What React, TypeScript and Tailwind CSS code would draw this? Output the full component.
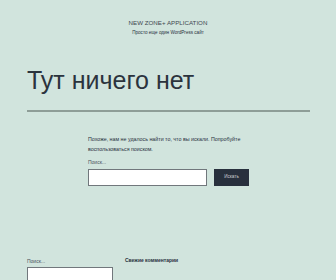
import React from "react";

export default function App() {
  return (
    <div className="w-[336px] h-[280px] overflow-hidden bg-[#d1e4dd] text-[#28303d] font-['Liberation_Sans',Arial,sans-serif]">
      <header className="pt-[19px] flex flex-col items-center">
        <div className="text-[6.2px] leading-[8px] text-[#3f4750] whitespace-nowrap">NEW ZONE+ APPLICATION</div>
        <div className="mt-[3px] text-[4.6px] leading-[6px] whitespace-nowrap">Просто еще один WordPress сайт</div>
      </header>
      <main className="px-[27px]">
        <h1 className="mt-[29px] text-[25px] leading-[30px] font-normal text-[#2b333d]">Тут ничего нет</h1>
        <div className="mt-[15px] h-[2px] bg-[#8e9d97] mr-[-1px]" />
        <div className="pl-[61px]">
          <p className="mt-[22px] w-[165px] text-[5.3px] leading-[10px]">
            Похоже, нам не удалось найти то, что вы искали. Попробуйте воспользоваться поиском.
          </p>
          <div className="mt-[4px] text-[5px] leading-[8px] text-[#4a525b]">Поиск...</div>
          <div className="mt-[3px] flex gap-[7px]">
            <div className="w-[119px] h-[17px] bg-white border border-[#71777c]" />
            <div className="w-[35px] h-[17px] bg-[#28303d] flex items-center justify-center text-[4.6px] text-[#c9ccd0]">Искать</div>
          </div>
        </div>
        <div className="mt-[71px] flex gap-[12px]">
          <div className="w-[86px]">
            <div className="text-[5px] leading-[8px] text-[#4a525b]">Поиск...</div>
            <div className="mt-[2px] h-[17px] bg-white border border-[#71777c]" />
          </div>
          <div className="text-[5px] leading-[6px] font-bold">Свежие комментарии</div>
        </div>
      </main>
    </div>
  );
}
